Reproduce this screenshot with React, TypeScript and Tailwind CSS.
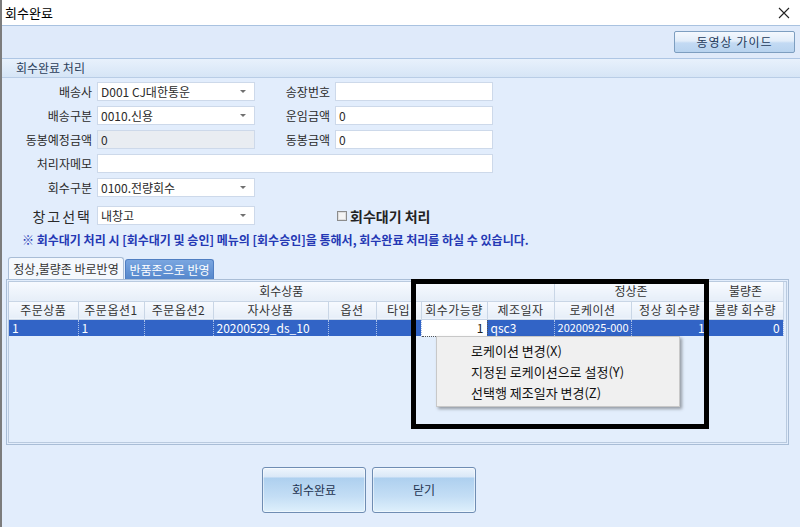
import React from "react";

const cols = [69, 66, 69, 115, 48, 45, 66, 67, 77, 77, 75];

function Combo({ value }: { value: string }) {
  return (
    <div className="flex h-[19px] w-[158px] items-center justify-between border border-[#cdd9ea] bg-white pl-[3px] pr-[8px]">
      <span className="leading-none">{value}</span>
      <span className="h-0 w-0 border-x-[3px] border-t-[3px] border-x-transparent border-t-[#707070]" />
    </div>
  );
}

function Field({
  value = "",
  width = "w-[158px]",
  disabled = false,
}: {
  value?: string;
  width?: string;
  disabled?: boolean;
}) {
  return (
    <div
      className={`flex h-[19px] items-center border border-[#cdd9ea] pl-[3px] leading-none ${width} ${
        disabled ? "bg-[#e9edf2]" : "bg-white"
      }`}
    >
      {value}
    </div>
  );
}

function Label({ text, w = "w-[95px]" }: { text: string; w?: string }) {
  return <span className={`${w} shrink-0 pr-[5px] text-right leading-none`}>{text}</span>;
}

function GlassButton({ label }: { label: string }) {
  return (
    <button className="h-[46px] w-[104px] rounded-[3px] border border-[#6f8db3] bg-[linear-gradient(to_bottom,#eef5fd_0%,#dae8f7_20%,#aed0ef_23%,#c4def5_65%,#def0fc_100%)] text-[12px] text-[#1f3350] shadow-[inset_0_0_0_1px_rgba(255,255,255,0.5)]">
      {label}
    </button>
  );
}

export default function App() {
  const headCell =
    "border-r border-b border-[#c9d6e6] bg-[linear-gradient(to_bottom,#f7faff,#e6eef8)] text-center font-normal text-[#333] leading-none";
  const dataCell = "border-r border-dotted border-[#a9c0e8] px-[3px] leading-none";

  return (
    <div className="relative flex h-[527px] w-[800px] flex-col overflow-hidden border-l-2 border-[#7c7c7c] bg-[#e2edfc] font-['Noto_Sans_CJK_KR','Noto_Sans',sans-serif] text-[12px] text-[#2a2a2a]">
      {/* title bar */}
      <div className="flex h-[26px] shrink-0 items-center justify-between border-b border-[#a9c2e0] bg-white pl-[3px] pr-[8px]">
        <span className="text-[13px] text-black">회수완료</span>
        <svg width="12" height="12" viewBox="0 0 12 12" className="mr-[2px]">
          <path d="M1 1 L11 11 M11 1 L1 11" stroke="#222" strokeWidth="1.1" />
        </svg>
      </div>

      {/* toolbar */}
      <div className="flex h-[33px] shrink-0 justify-end border-b border-[#aec6e4] bg-[#dfeafa] pr-[5px] pt-[5px]">
        <button className="h-[22px] w-[121px] rounded-[2px] border border-[#7d9ec0] bg-[linear-gradient(to_bottom,#f4f8fe_0%,#e2edf9_45%,#c3daf3_55%,#b8d3ef_100%)] text-[12px] tracking-[1px] text-[#243a5a]">
          동영상 가이드
        </button>
      </div>

      {/* section header */}
      <div className="flex h-[19px] shrink-0 items-center border-b border-[#b9cde6] bg-[linear-gradient(to_bottom,#e8f1fc,#d6e5f6)] pl-[14px] text-[#2c3e5a]">
        회수완료 처리
      </div>

      {/* form */}
      <div className="flex flex-col gap-[5px] pt-[4px]">
        <div className="flex items-center">
          <Label text="배송사" />
          <Combo value="D001 CJ대한통운" />
          <Label text="송장번호" w="w-[80px]" />
          <Field />
        </div>
        <div className="flex items-center">
          <Label text="배송구분" />
          <Combo value="0010.신용" />
          <Label text="운임금액" w="w-[80px]" />
          <Field value="0" />
        </div>
        <div className="flex items-center">
          <Label text="동봉예정금액" />
          <Field value="0" disabled />
          <Label text="동봉금액" w="w-[80px]" />
          <Field value="0" />
        </div>
        <div className="flex items-center">
          <Label text="처리자메모" />
          <Field width="w-[396px]" />
        </div>
        <div className="flex items-center">
          <Label text="회수구분" />
          <Combo value="0100.전량회수" />
        </div>
        <div className="mt-[4px] flex items-center">
          <span className="w-[95px] shrink-0 pr-[5px] text-right text-[14px] leading-none tracking-[2px]">
            창고선택
          </span>
          <Combo value="내창고" />
          <div className="ml-[82px] flex items-center gap-[3px]">
            <span className="h-[10px] w-[10px] border border-[#8c8c8c] bg-[#f4f4f4] shadow-[inset_0_0_0_1px_#dedede]" />
            <span className="text-[14px] font-bold leading-none text-[#222]">회수대기 처리</span>
          </div>
        </div>
      </div>
      <div className="mt-[8px] pl-[20px] text-[12px] font-bold leading-[14px] text-[#2438b4]">
        ※ 회수대기 처리 시 [회수대기 및 승인] 메뉴의 [회수승인]을 통해서, 회수완료 처리를 하실 수 있습니다.
      </div>

      {/* tabs */}
      <div className="mt-[10px] flex items-end pl-[6px]">
        <div className="flex h-[22px] w-[116px] items-center justify-center whitespace-nowrap rounded-t-[3px] border border-b-0 border-[#a9bdd6] bg-[#f4f8fd] text-[#333]">
          정상,불량존 바로반영
        </div>
        <div className="ml-[1px] flex h-[20px] w-[89px] items-center justify-center whitespace-nowrap rounded-t-[3px] border border-b-0 border-[#4f7ec2] bg-[linear-gradient(to_bottom,#7aa6e0,#5587cc)] text-white">
          반품존으로 반영
        </div>
      </div>

      {/* grid */}
      <div className="ml-[4px] h-[166px] w-[783px] border border-[#a9bdd6] p-px">
        <div className="h-full border border-[#b9cadf] bg-[#e3eefc]">
          <table className="table-fixed border-collapse" style={{ width: 774 }}>
            <colgroup>
              {cols.map((w, i) => (
                <col key={i} style={{ width: w }} />
              ))}
            </colgroup>
            <thead>
              <tr className="h-[19px]">
                <th colSpan={8} className={headCell}>
                  회수상품
                </th>
                <th colSpan={2} className={headCell}>
                  정상존
                </th>
                <th className={headCell}>불량존</th>
              </tr>
              <tr className="h-[18px]">
                {[
                  "주문상품",
                  "주문옵션1",
                  "주문옵션2",
                  "자사상품",
                  "옵션",
                  "타입",
                  "회수가능량",
                  "제조일자",
                  "로케이션",
                  "정상 회수량",
                  "불량 회수량",
                ].map((h) => (
                  <th key={h} className={`${headCell} tracking-[0.5px]`}>
                    {h}
                  </th>
                ))}
              </tr>
            </thead>
            <tbody>
              <tr className="h-[17px] bg-[#3264c6] text-white">
                <td className={dataCell}>1</td>
                <td className={dataCell}>1</td>
                <td className={dataCell}></td>
                <td className={dataCell}>20200529_ds_10</td>
                <td className={dataCell}></td>
                <td className={dataCell}></td>
                <td className="border-r border-b border-dotted border-[#555] bg-white px-[3px] text-right leading-none text-[#222]">
                  1
                </td>
                <td className={dataCell}>qsc3</td>
                <td className={`${dataCell} whitespace-nowrap text-[11px]`}>20200925-000</td>
                <td className={`${dataCell} text-right`}>1</td>
                <td className={`${dataCell} text-right`}>0</td>
              </tr>
            </tbody>
          </table>
        </div>
      </div>

      {/* bottom buttons */}
      <div className="mt-[22px] flex gap-[6px] pl-[260px]">
        <GlassButton label="회수완료" />
        <GlassButton label="닫기" />
      </div>

      {/* annotation frame */}
      <div className="pointer-events-none absolute left-[409px] top-[279px] h-[150px] w-[298px] border-[5px] border-black" />

      {/* context menu */}
      <div className="absolute left-[434px] top-[336px] flex h-[71px] w-[244px] flex-col border border-[#c8c8c8] bg-[#f0f0f0] pt-[3px] text-[13px] text-[#111] shadow-[2px_2px_3px_rgba(0,0,0,0.35)]">
        <div className="flex h-[21px] items-center pl-[34px]">로케이션 변경(X)</div>
        <div className="flex h-[21px] items-center pl-[34px]">지정된 로케이션으로 설정(Y)</div>
        <div className="flex h-[22px] items-center pl-[34px]">선택행 제조일자 변경(Z)</div>
      </div>
    </div>
  );
}
